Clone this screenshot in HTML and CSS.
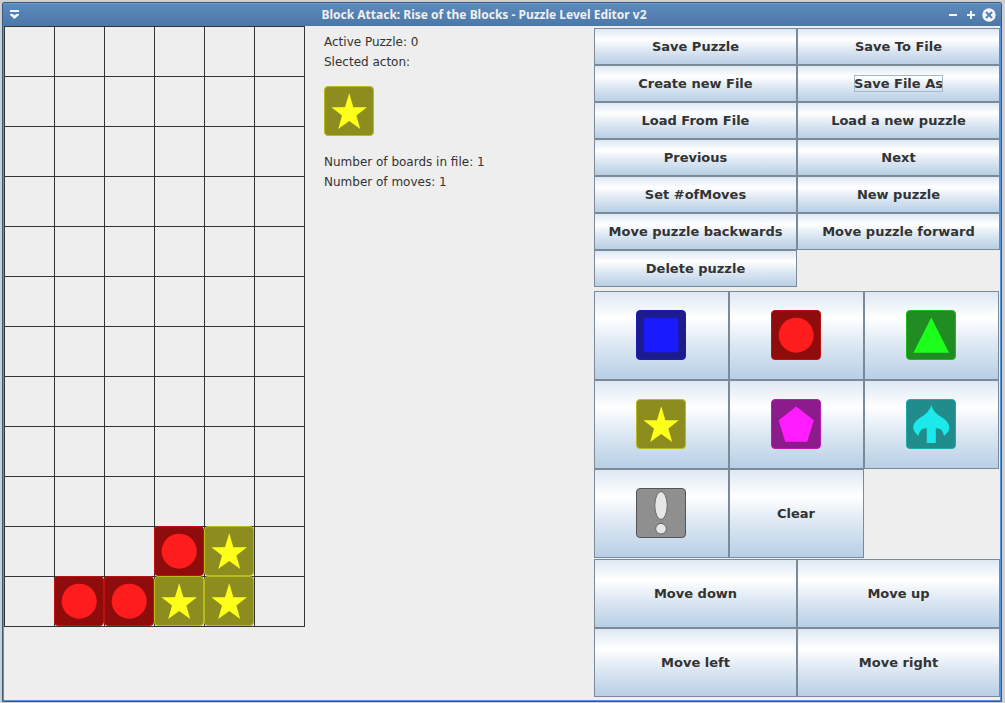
FILE: index.html
```
<!DOCTYPE html>
<html lang="en">
<head>
<meta charset="utf-8">
<title>Block Attack: Rise of the Blocks - Puzzle Level Editor v2</title>
<link rel="stylesheet" href="styles.css">
</head>
<body>
<svg class="sprites" aria-hidden="true">
  <symbol id="blue" viewBox="0 0 50 50">
    <rect x=".5" y=".5" width="49" height="49" rx="3.5" fill="#1c1c8c" stroke="#1c1cb4"/>
    <rect x="7.7" y="7.7" width="34.6" height="34.6" rx="2.5" fill="#1a1aff"/>
  </symbol>
  <symbol id="red" viewBox="0 0 50 50">
    <rect x=".5" y=".5" width="49" height="49" rx="3.5" fill="#8f0c0c" stroke="#bf0f0f"/>
    <circle cx="25.2" cy="25.2" r="17.5" fill="#ff1c1c"/>
  </symbol>
  <symbol id="green" viewBox="0 0 50 50">
    <rect x=".5" y=".5" width="49" height="49" rx="3.5" fill="#218c21" stroke="#1cba1c"/>
    <path d="M25.3 7.5 43 42.7H7.4z" fill="#1cff1c"/>
  </symbol>
  <symbol id="yellow" viewBox="0 0 50 50">
    <rect x=".5" y=".5" width="49" height="49" rx="3.5" fill="#8c8c1f" stroke="#baba1c"/>
    <path d="M25.2 7.2 29.4 21.2H42.9L32.4 29.5 36.2 43 25.2 35 14.2 43 18 29.5 7.5 21.2H21z" fill="#ffff1c"/>
  </symbol>
  <symbol id="magenta" viewBox="0 0 50 50">
    <rect x=".5" y=".5" width="49" height="49" rx="3.5" fill="#8c1c8c" stroke="#ba1cba"/>
    <path d="M25.2 7.6 42.8 21.3 36.2 42.8H14.2L7.7 21.3z" fill="#ff1cff"/>
  </symbol>
  <symbol id="cyan" viewBox="0 0 50 50">
    <rect x=".5" y=".5" width="49" height="49" rx="3.5" fill="#218c8c" stroke="#1cacac"/>
    <path d="M25.300 6.300C26.800 11.500 30.500 15.500 36 18.500C40.500 21 43.300 25 43.300 28.500C43.300 31.500 41 34.500 38 37C37.200 32 34.500 28.800 29.800 29.400V44H20.800V29.400C16 28.800 13.400 32 12.600 37C9.500 34.500 7.200 31.500 7.200 28.500C7.200 25 10 21 14.500 18.500C20 15.500 23.800 11.500 25.300 6.300z" fill="#1ceaea"/>
  </symbol>
  <symbol id="gray" viewBox="0 0 50 50">
    <rect x=".5" y=".5" width="49" height="49" rx="3.5" fill="#8f8f8f" stroke="#545454"/>
    <ellipse cx="25" cy="17.5" rx="6.200" ry="14" fill="#e6e6e6" stroke="#666"/>
    <circle cx="25" cy="40.700" r="5.300" fill="#e6e6e6" stroke="#666"/>
  </symbol>
</svg>

<div class="window">
  <header class="titlebar">
    <button class="wm-button" type="button" aria-label="Window menu">
      <svg width="10" height="10" viewBox="0 0 10 10"><path d="M0 0h9v2H0zM0 4h9v1L4.500 9 0 5z" fill="#f4f4f4"/><path d="M3 4h3L4.500 5.500z" fill="#5582b4"/></svg>
    </button>
    <h1 class="title">Block Attack: Rise of the Blocks - Puzzle Level Editor v2</h1>
    <button class="wm-button" type="button" aria-label="Minimize">
      <svg width="8" height="8" viewBox="0 0 8 8"><path d="M0 3h8v2H0z" fill="#f4f4f4"/></svg>
    </button>
    <button class="wm-button" type="button" aria-label="Maximize">
      <svg width="8" height="8" viewBox="0 0 8 8"><path d="M0 3h3V0h2v3h3v2H5v3H3V5H0z" fill="#f4f4f4"/></svg>
    </button>
    <button class="wm-button" type="button" aria-label="Close">
      <svg width="14" height="14" viewBox="0 0 14 14"><circle cx="7" cy="7" r="6.700" fill="#f4f4f4"/><path d="M4 4l6 6M10 4l-6 6" stroke="#5582b4" stroke-width="2"/></svg>
    </button>
  </header>

  <main class="content">
    <div class="board" id="board"></div>

    <section class="info">
      <p>Active Puzzle: 0</p>
      <p>Slected acton:</p>
      <svg class="block selected"><use href="#yellow"/></svg>
      <p>Number of boards in file: 1</p>
      <p>Number of moves: 1</p>
    </section>

    <section class="controls">
      <div class="pad file-pad">
        <button type="button">Save Puzzle</button>
        <button type="button">Save To File</button>
        <button type="button">Create new File</button>
        <button type="button"><span class="focused">Save File As</span></button>
        <button type="button">Load From File</button>
        <button type="button">Load a new puzzle</button>
        <button type="button">Previous</button>
        <button type="button">Next</button>
        <button type="button">Set #ofMoves</button>
        <button type="button">New puzzle</button>
        <button type="button">Move puzzle backwards</button>
        <button type="button">Move puzzle forward</button>
        <button type="button">Delete puzzle</button>
      </div>
      <div class="pad block-pad">
        <button type="button" aria-label="Blue block"><svg class="block"><use href="#blue"/></svg></button>
        <button type="button" aria-label="Red block"><svg class="block"><use href="#red"/></svg></button>
        <button type="button" aria-label="Green block"><svg class="block"><use href="#green"/></svg></button>
        <button type="button" aria-label="Yellow block"><svg class="block"><use href="#yellow"/></svg></button>
        <button type="button" aria-label="Magenta block"><svg class="block"><use href="#magenta"/></svg></button>
        <button type="button" aria-label="Cyan block"><svg class="block"><use href="#cyan"/></svg></button>
        <button type="button" aria-label="Gray block"><svg class="block"><use href="#gray"/></svg></button>
        <button type="button">Clear</button>
      </div>
      <div class="pad move-pad">
        <button type="button">Move down</button>
        <button type="button">Move up</button>
        <button type="button">Move left</button>
        <button type="button">Move right</button>
      </div>
    </section>
  </main>
</div>
<script src="board.js"></script>
</body>
</html>
```
FILE: styles.css
```
* {
  box-sizing: border-box;
}

body {
  margin: 0;
  padding: 2px 3px 1px 2px;
  min-height: 100vh;
  display: flex;
  background: #cfcfcf;
  color: #333;
  font: 12px/20px "DejaVu Sans", sans-serif;
}

.sprites {
  position: absolute;
  width: 0;
  height: 0;
}

.window {
  flex: 1;
  display: flex;
  flex-direction: column;
  border: 1px solid #35597f;
  border-radius: 2px 2px 0 0;
  box-shadow: inset 0 0 0 1px #5294e2;
  padding: 1px;
  background: #eee;
}

.titlebar {
  display: flex;
  align-items: center;
  height: 23px;
  margin: -1px -1px 0;
  padding: 0 3px;
  border-top: 1px solid #6a9bd0;
  background: linear-gradient(#5c8abb, #4c78a8);
}

.title {
  flex: 1;
  margin: 0;
  text-align: center;
  color: #f0f0f0;
  font: bold 12px/20px "Noto Sans", sans-serif;
}

.wm-button {
  display: flex;
  justify-content: center;
  width: 18px;
  padding: 0;
  border: 0;
  background: none;
}

.content {
  flex: 1;
  display: grid;
  grid-template-columns: auto 1fr 406px;
}

.board {
  display: grid;
  grid-template-columns: repeat(6, 50px);
  align-self: start;
  border: solid #333;
  border-width: 0 1px 1px 0;
}

.cell {
  height: 50px;
  box-shadow: inset 1px 1px #333;
}

.block {
  display: block;
  width: 50px;
  height: 50px;
}

.info {
  padding: 6px 0 0 19px;
}

.info p {
  margin: 0;
}

.selected {
  margin: 14px 0 16px;
}

.controls {
  display: flex;
  flex-direction: column;
  padding: 2px 0 3px;
}

.pad {
  display: grid;
  grid-template-columns: 1fr 1fr;
}

.pad button {
  display: flex;
  align-items: center;
  justify-content: center;
  padding: 0;
  border: 1px solid #7a8a99;
  background: linear-gradient(#dde8f3, #fff 30%, #dde8f3 60%, #b8cfe5);
  color: #333;
  font: bold 13px/17px "DejaVu Sans", sans-serif;
}

.file-pad {
  grid-auto-rows: 37px;
}

.block-pad {
  flex: 2 1 auto;
  grid-template-columns: repeat(3, 1fr);
  grid-auto-rows: minmax(89px, 1fr);
  margin: 4px 1px 1px 0;
}

.block-pad button {
  padding: 0 1px 1px 0;
}

.move-pad {
  flex: 1 1 auto;
  grid-auto-rows: minmax(69px, 1fr);
}

.focused {
  outline: 1px solid #a3b8cc;
  outline-offset: -1px;
}
```
FILE: board.js
```
const rows = [
  ...Array(10).fill("......"),
  "...ry.",
  ".rryy."
];
const names = { r: "red", y: "yellow" };

document.getElementById("board").innerHTML = rows
  .flatMap(row => [...row])
  .map(c => `<div class="cell">${names[c] ? `<svg class="block"><use href="#${names[c]}"/></svg>` : ""}</div>`)
  .join("");
```
